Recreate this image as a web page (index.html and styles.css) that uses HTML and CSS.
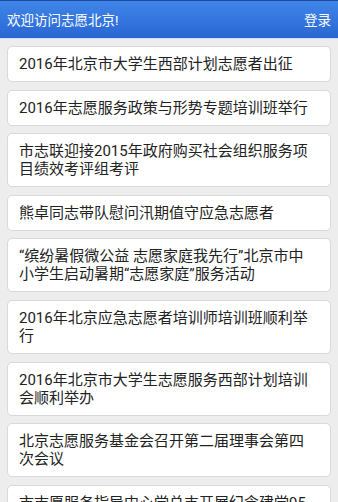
FILE: index.html
```html
<!DOCTYPE html>
<html lang="zh-CN">
<head>
<meta charset="utf-8">
<link rel="stylesheet" href="styles.css">
</head>
<body>
<header class="topbar">
  <span class="welcome">欢迎访问志愿北京!</span>
  <span class="login">登录</span>
</header>
<main class="list">
  <div class="card">2016年北京市大学生西部计划志愿者出征</div>
  <div class="card">2016年志愿服务政策与形势专题培训班举行</div>
  <div class="card">市志联迎接2015年政府购买社会组织服务项目绩效考评组考评</div>
  <div class="card">熊卓同志带队慰问汛期值守应急志愿者</div>
  <div class="card">“缤纷暑假微公益 志愿家庭我先行”北京市中小学生启动暑期“志愿家庭”服务活动</div>
  <div class="card">2016年北京应急志愿者培训师培训班顺利举行</div>
  <div class="card">2016年北京市大学生志愿服务西部计划培训会顺利举办</div>
  <div class="card">北京志愿服务基金会召开第二届理事会第四次会议</div>
  <div class="card">市志愿服务指导中心党总支开展纪念建党95周年系列活动</div>
</main>
</body>
</html>
```
FILE: styles.css
```css
html, body {
  margin: 0;
  padding: 0;
  background: #ededed;
}
body {
  font-family: "Roboto", "Noto Sans CJK SC", sans-serif;
  overflow: hidden;
  height: 502px;
}
.topbar {
  height: 37px;
  box-sizing: border-box;
  border-top: 1px solid #1d4a9c;
  border-bottom: 1px solid #cddff6;
  background: linear-gradient(#3f86e9, #2966d3);
  display: flex;
  align-items: center;
  justify-content: space-between;
  padding: 0 7px 1px 7px;
  color: #fff;
  font-size: 13.5px;
  box-sizing: content-box;
  height: 36px;
}
.list {
  display: flex;
  flex-direction: column;
  gap: 7.6px;
  padding: 7px 7px 0 7px;
}
.card {
  background: #fff;
  border: 1px solid #d9d9d9;
  border-radius: 5px;
  padding: 8px 12px 8px 11px;
  font-size: 15px;
  line-height: 18px;
  color: #222;
}
```
